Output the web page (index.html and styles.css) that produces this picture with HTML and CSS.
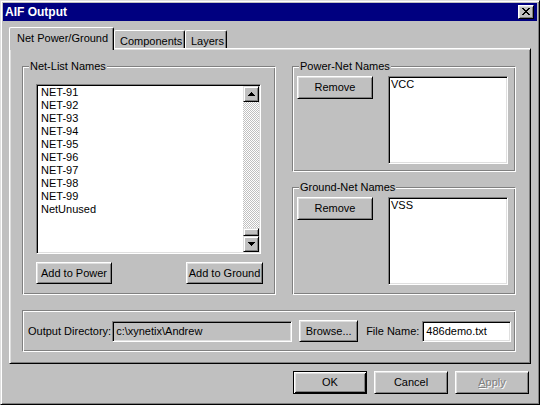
FILE: index.html
```html
<!DOCTYPE html>
<html lang="en">
<head>
    <meta charset="UTF-8">
    <meta name="viewport" content="width=device-width, initial-scale=1.0">
    <title>AIF Output</title>
    <link rel="stylesheet" href="styles.css">
</head>
<body>
    <div class="window">
        <div class="titlebar">
            <span class="title">AIF Output</span>
            <button class="close-btn">
                <svg width="8" height="7" viewBox="0 0 8 7" shape-rendering="crispEdges">
                    <path d="M0 0h2v1H0zM6 0h2v1H6zM1 1h2v1H1zM5 1h2v1H5zM2 2h4v1H2zM3 3h2v1H3zM2 4h4v1H2zM1 5h2v1H1zM5 5h2v1H5zM0 6h2v1H0zM6 6h2v1H6z" fill="#000"/>
                </svg>
            </button>
        </div>

        <div class="body">
            <div class="tabs">
                <div class="tab tab-active tab-net">Net Power/Ground</div>
                <div class="tab tab-comp">Components</div>
                <div class="tab tab-layers">Layers</div>
            </div>

            <div class="panel">
                <div class="group-row">
                    <div class="group netlist">
                        <span class="group-label">Net-List Names</span>
                        <div class="listbox big-list">
                            <ul class="items">
                                <li>NET-91</li>
                                <li>NET-92</li>
                                <li>NET-93</li>
                                <li>NET-94</li>
                                <li>NET-95</li>
                                <li>NET-96</li>
                                <li>NET-97</li>
                                <li>NET-98</li>
                                <li>NET-99</li>
                                <li>NetUnused</li>
                            </ul>
                            <div class="scrollbar">
                                <div class="sb-btn">
                                    <svg width="7" height="4" viewBox="0 0 7 4" shape-rendering="crispEdges">
                                        <path d="M3 0h1v1H3zM2 1h3v1H2zM1 2h5v1H1zM0 3h7v1H0z" fill="#000"/>
                                    </svg>
                                </div>
                                <div class="sb-track"></div>
                                <div class="sb-thumb"></div>
                                <div class="sb-btn">
                                    <svg width="7" height="4" viewBox="0 0 7 4" shape-rendering="crispEdges">
                                        <path d="M0 0h7v1H0zM1 1h5v1H1zM2 2h3v1H2zM3 3h1v1H3z" fill="#000"/>
                                    </svg>
                                </div>
                            </div>
                        </div>
                        <div class="add-row">
                            <button class="btn btn-add-power">Add to Power</button>
                            <button class="btn btn-add-ground">Add to Ground</button>
                        </div>
                    </div>

                    <div class="net-col">
                        <div class="group net-group power-group">
                            <span class="group-label">Power-Net Names</span>
                            <button class="btn btn-remove">Remove</button>
                            <ul class="listbox small-list">
                                <li>VCC</li>
                            </ul>
                        </div>
                        <div class="group net-group ground-group">
                            <span class="group-label">Ground-Net Names</span>
                            <button class="btn btn-remove">Remove</button>
                            <ul class="listbox small-list">
                                <li>VSS</li>
                            </ul>
                        </div>
                    </div>
                </div>

                <div class="group output">
                    <span class="field-label">Output Directory:</span>
                    <div class="field field-readonly dir-field">c:\xynetix\Andrew</div>
                    <button class="btn btn-browse">Browse...</button>
                    <span class="field-label file-label">File Name:</span>
                    <div class="field file-field">486demo.txt</div>
                </div>
            </div>

            <div class="footer">
                <button class="btn btn-default">OK</button>
                <button class="btn btn-dialog">Cancel</button>
                <button class="btn btn-dialog btn-disabled"><u>A</u>pply</button>
            </div>
        </div>
    </div>
</body>
</html>
```

FILE: styles.css
```css
body {
    margin: 0;
    padding: 0;
    background-color: #c0c0c0;
    font-family: "Liberation Sans", Arial, sans-serif;
    font-size: 11px;
    line-height: 13px;
    color: #000;
}
ul {
    list-style: none;
    margin: 0;
    padding: 0;
}
button {
    font-family: inherit;
    font-size: 11px;
    line-height: 13px;
    color: #000;
    padding: 0;
    margin: 0;
    background-color: #c0c0c0;
}

/* window frame */
.window {
    width: 540px;
    height: 405px;
    box-sizing: border-box;
    padding: 2px;
    border: 1px solid;
    border-color: #dfdfdf #000 #000 #dfdfdf;
    box-shadow: inset 1px 1px #fff, inset -1px -1px #808080;
    background-color: #c0c0c0;
}
.titlebar {
    height: 18px;
    background-color: #000080;
    display: flex;
    align-items: center;
    justify-content: space-between;
    padding: 0 3px 0 2px;
}
.title {
    color: #fff;
    font-weight: bold;
    font-size: 12px;
}
.close-btn {
    width: 16px;
    height: 14px;
    box-sizing: border-box;
    border: 1px solid;
    border-color: #fff #000 #000 #fff;
    box-shadow: inset 1px 1px #dfdfdf, inset -1px -1px #808080;
    display: flex;
    align-items: center;
    justify-content: center;
    padding: 0 1px 1px 0;
}
.close-btn svg {
    display: block;
}

.body {
    padding: 6px 0 0 6px;
}

/* tabs */
.tabs {
    display: flex;
    align-items: flex-end;
    height: 21px;
}
.tab {
    height: 18px;
    box-sizing: border-box;
    padding: 4px 0 0 5px;
    border-top: 1px solid #fff;
    border-left: 1px solid #fff;
    border-right: 1px solid #000;
    border-radius: 2px 2px 0 0;
    box-shadow: inset -1px 0 #808080;
    white-space: nowrap;
}
.tab-active {
    position: relative;
    z-index: 1;
    height: 23px;
    margin-bottom: -2px;
    padding: 4px 0 0 7px;
    background-color: #c0c0c0;
}
.tab-net {
    width: 105px;
}
.tab-comp {
    width: 71px;
}
.tab-layers {
    width: 42px;
}

.panel {
    width: 522px;
    height: 316px;
    box-sizing: border-box;
    padding: 17px 0 0 12px;
    border: 1px solid;
    border-color: #fff #000 #000 #fff;
    box-shadow: inset 1px 1px #dfdfdf, inset -1px -1px #808080;
}

/* etched group boxes */
.group {
    position: relative;
    box-sizing: border-box;
    border: 1px solid;
    border-color: #808080 #fff #fff #808080;
    box-shadow: inset 1px 1px #fff, inset -1px -1px #808080;
}
.group-label {
    position: absolute;
    top: -7px;
    left: 6px;
    padding: 0 1px;
    background-color: #c0c0c0;
    white-space: nowrap;
}
.group-row {
    display: flex;
    gap: 16px;
    height: 229px;
}
.netlist {
    width: 254px;
    padding: 17px 0 0 13px;
}
.net-col {
    width: 224px;
    display: flex;
    flex-direction: column;
    gap: 15px;
}
.net-group {
    display: flex;
    align-items: flex-start;
    padding: 9px 0 0 4px;
}
.power-group {
    height: 106px;
}
.ground-group {
    height: 108px;
}

/* list boxes */
.listbox {
    box-sizing: border-box;
    padding: 1px;
    background-color: #fff;
    border: 1px solid;
    border-color: #808080 #fff #fff #808080;
    box-shadow: inset 1px 1px #000, inset -1px -1px #dfdfdf;
}
.listbox li {
    padding-left: 3px;
    height: 13px;
    white-space: nowrap;
}
.big-list {
    width: 225px;
    height: 170px;
    display: flex;
}
.items {
    flex: 1;
}
.small-list {
    width: 120px;
    height: 88px;
    margin-left: 15px;
}
.small-list li {
    padding-left: 1px;
}

/* scrollbar */
.scrollbar {
    width: 16px;
    display: flex;
    flex-direction: column;
}
.sb-btn,
.sb-thumb {
    box-sizing: border-box;
    background-color: #c0c0c0;
    border: 1px solid;
    border-color: #dfdfdf #000 #000 #dfdfdf;
    box-shadow: inset 1px 1px #fff, inset -1px -1px #808080;
}
.sb-btn {
    height: 16px;
    display: flex;
    align-items: center;
    justify-content: center;
}
.sb-btn svg {
    display: block;
}
.sb-thumb {
    height: 8px;
}
.sb-track {
    flex: 1;
    background-color: #fff;
    background-image: repeating-conic-gradient(#c0c0c0 0 25%, #fff 0 50%);
    background-size: 2px 2px;
}

/* buttons */
.btn {
    box-sizing: border-box;
    border: 1px solid;
    border-color: #fff #000 #000 #fff;
    box-shadow: inset 1px 1px #dfdfdf, inset -1px -1px #808080;
    text-align: center;
    white-space: nowrap;
    flex-shrink: 0;
}
.add-row {
    width: 227px;
    margin-top: 8px;
    display: flex;
    justify-content: space-between;
}
.btn-add-power {
    width: 76px;
    height: 22px;
}
.btn-add-ground {
    width: 77px;
    height: 22px;
}
.btn-remove {
    width: 76px;
    height: 23px;
}

/* output directory */
.output {
    width: 494px;
    height: 42px;
    margin-top: 15px;
    display: flex;
    align-items: center;
    padding-left: 5px;
}
.field-label {
    white-space: nowrap;
    flex-shrink: 0;
}
.field {
    box-sizing: border-box;
    flex-shrink: 0;
    height: 21px;
    padding: 3px 0 0 3px;
    background-color: #fff;
    border: 1px solid;
    border-color: #808080 #fff #fff #808080;
    box-shadow: inset 1px 1px #000, inset -1px -1px #dfdfdf;
    white-space: nowrap;
    overflow: hidden;
}
.field-readonly {
    background-color: #c0c0c0;
}
.dir-field {
    width: 180px;
    margin-left: 1px;
}
.btn-browse {
    width: 59px;
    height: 22px;
    margin-left: 7px;
}
.file-label {
    margin-left: 8px;
}
.file-field {
    width: 89px;
    margin-left: 3px;
}

/* dialog buttons */
.footer {
    display: flex;
    justify-content: flex-end;
    gap: 7px;
    margin-top: 7px;
    padding-right: 8px;
}
.btn-dialog,
.btn-default {
    width: 74px;
    height: 23px;
}
.btn-default {
    border: 1px solid #000;
    box-shadow: inset 1px 1px #fff, inset -1px -1px #000, inset 2px 2px #dfdfdf, inset -2px -2px #808080;
}
.btn-disabled {
    color: #808080;
    text-shadow: 1px 1px #fff;
}
```
